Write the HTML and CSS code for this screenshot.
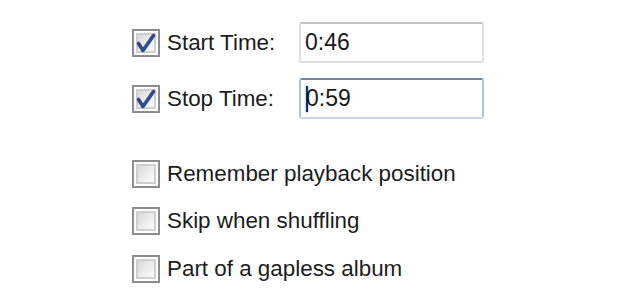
FILE: index.html
```html
<!DOCTYPE html>
<html>
<head>
<meta charset="utf-8">
<link rel="stylesheet" href="styles.css">
</head>
<body>
<div class="panel">
  <div class="row time-row">
    <span class="cb checked"><span class="cb-in"></span><svg class="tick" viewBox="0 0 28 28"><path d="M6.5 14.5 L11 21.5 L21.5 6.5" /></svg></span>
    <span class="label">Start Time:</span>
    <div class="field">0:46</div>
  </div>
  <div class="row time-row second">
    <span class="cb checked"><span class="cb-in"></span><svg class="tick" viewBox="0 0 28 28"><path d="M6.5 14.5 L11 21.5 L21.5 6.5" /></svg></span>
    <span class="label">Stop Time:</span>
    <div class="field focused"><span class="caret"></span>0:59</div>
  </div>
  <div class="row opt first-opt">
    <span class="cb"><span class="cb-in"></span></span>
    <span class="text">Remember playback position</span>
  </div>
  <div class="row opt o2">
    <span class="cb"><span class="cb-in"></span></span>
    <span class="text">Skip when shuffling</span>
  </div>
  <div class="row opt o3">
    <span class="cb"><span class="cb-in"></span></span>
    <span class="text">Part of a gapless album</span>
  </div>
</div>
</body>
</html>
```
FILE: styles.css
```css
html, body {
  margin: 0;
  background: #ffffff;
}
body {
  font-family: "Liberation Sans", Arial, sans-serif;
  font-size: 22.4px;
  color: #1c1c1c;
}
.panel {
  display: flex;
  flex-direction: column;
  padding: 22px 0 0 132px;
}
.row {
  display: flex;
  align-items: center;
}
.time-row {
  height: 41px;
}
.second {
  margin-top: 15px;
}
.opt {
  height: 28px;
}
.first-opt {
  margin-top: 41px;
}
.o2 {
  margin-top: 19px;
}
.o3 {
  margin-top: 20px;
}
.cb {
  position: relative;
  flex: none;
  box-sizing: border-box;
  width: 28px;
  height: 28px;
  border: 2px solid #8d8d8d;
  padding: 2px;
  background: #ffffff;
  display: flex;
}
.cb-in {
  flex: 1;
  box-sizing: border-box;
  border: 2px solid #cfcfcf;
  background: linear-gradient(135deg, #d9d9d9 0%, #ececec 50%, #fbfbfb 100%);
}
.tick {
  position: absolute;
  left: -2px;
  top: -2px;
  width: 28px;
  height: 28px;
}
.tick path {
  fill: none;
  stroke: #304a8e;
  stroke-width: 3.6;
  stroke-linecap: round;
  stroke-linejoin: round;
}
.label {
  width: 132px;
  margin-left: 7px;
  flex: none;
}
.text {
  margin-left: 7px;
}
.field {
  box-sizing: border-box;
  width: 185px;
  height: 41px;
  border: 2px solid #dedede;
  border-top-color: #c2c2c2;
  border-radius: 3px;
  padding: 0 0 0 4px;
  display: flex;
  align-items: center;
  font-size: 23px;
  color: #1a1a1a;
  background: #ffffff;
}
.field.focused {
  border-color: #a9c4de;
  border-top-color: #6a88a6;
  border-bottom-color: #c4d9ee;
}
.caret {
  display: inline-block;
  width: 2px;
  height: 26px;
  margin-right: -2px;
  margin-left: 1px;
  background: #0f2f86;
  box-shadow: 0 0 2px #3d7bd9;
}
```
